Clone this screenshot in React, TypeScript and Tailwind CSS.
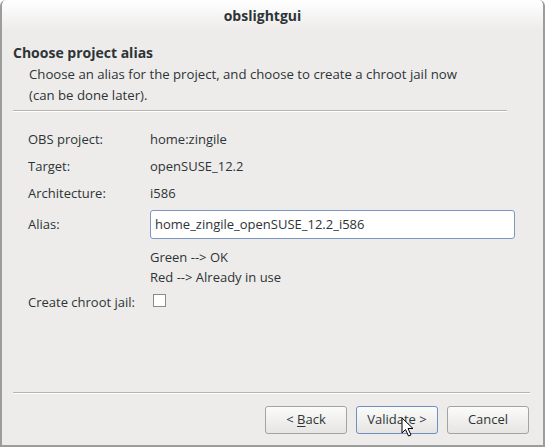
import React from "react";

const font = { fontFamily: '"Open Sans", "DejaVu Sans", sans-serif' };

function Row({ label, value }: { label: string; value: string }) {
  return (
    <div className="flex h-[27px] items-center">
      <div className="w-[122px]">{label}</div>
      <div>{value}</div>
    </div>
  );
}

function Btn({ children, hover }: { children: React.ReactNode; hover?: boolean }) {
  return (
    <div
      className={
        "flex h-[28px] w-[82px] items-center justify-center rounded-[3px] border bg-gradient-to-b from-[#fbfbfa] to-[#e6e5e3] text-[13px] text-[#2e3436] " +
        (hover ? "border-[#6f8fbf]" : "border-[#a3a3a0]")
      }
    >
      {children}
    </div>
  );
}

export default function App() {
  return (
    <div
      className="relative flex h-[447px] w-[545px] flex-col overflow-hidden rounded-t-[6px] border-x-2 border-b-2 border-[#9c9c9a] bg-[#edeceb] text-[13px] text-[#2e3436]"
      style={font}
    >
      <div className="flex h-[30px] shrink-0 items-center justify-center bg-gradient-to-b from-white to-[#edeceb] pr-[20px] text-[14px] font-bold text-[#2e3436]">
        obslightgui
      </div>
      <div className="px-[11px] pt-[13px]">
        <div className="text-[14px] font-bold leading-[20px]">Choose project alias</div>
        <div className="mt-[1px] pl-[16px] text-[13.2px] leading-[21px]">
          Choose an alias for the project, and choose to create a chroot jail now
          <br />
          (can be done later).
        </div>
        <div className="mt-[4px] mr-[25px] h-[2px] border-t border-[#b6b5b2] bg-white" />
      </div>
      <div className="px-[26px] pt-[14px]">
        <Row label="OBS project:" value="home:zingile" />
        <Row label="Target:" value="openSUSE_12.2" />
        <Row label="Architecture:" value="i586" />
        <div className="mt-[3px] flex h-[29px] items-center">
          <div className="w-[122px]">Alias:</div>
          <div className="flex h-[29px] w-[365px] items-center rounded-[3px] border border-[#7b98c4] bg-white pl-[4px]">
            home_zingile_openSUSE_12.2_i586
          </div>
        </div>
        <div className="mt-[8px] pl-[122px] leading-[20px]">
          <div>Green --&gt; OK</div>
          <div>Red --&gt; Already in use</div>
        </div>
        <div className="mt-[4px] flex h-[24px] items-center">
          <div className="w-[125px]">Create chroot jail:</div>
          <div className="-mt-[6px] h-[13px] w-[13px] border border-[#8a8a88] bg-white" />
        </div>
      </div>
      <div className="flex-1" />
      <div className="px-[11px]">
        <div className="mr-[2px] h-[2px] border-t border-[#b6b5b2] bg-white" />
      </div>
      <div className="flex justify-end gap-[9px] pr-[14px] pt-[12px] pb-[11px]">
        <Btn>
          &lt;&nbsp;<span className="underline underline-offset-2">B</span>ack
        </Btn>
        <Btn hover>Validate &gt;</Btn>
        <Btn>Cancel</Btn>
      </div>
      <svg
        className="absolute left-[399px] top-[417px]"
        width="14"
        height="22"
        viewBox="0 0 14 22"
      >
        <path
          d="M1 1 L1 16 L4.5 12.5 L7.5 19 L10 18 L7 11.5 L12 11.5 Z"
          fill="white"
          stroke="black"
          strokeWidth="1"
          strokeLinejoin="round"
        />
      </svg>
    </div>
  );
}
